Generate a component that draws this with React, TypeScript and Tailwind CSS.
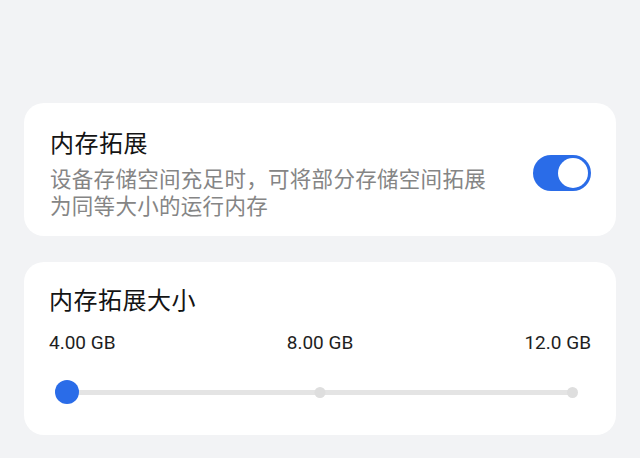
import React from "react";

export default function App() {
  const cjk = { fontFamily: '"Noto Sans CJK SC", "Noto Sans", sans-serif' };
  return (
    <div
      className="w-[640px] h-[458px] bg-[#f2f3f5] overflow-hidden pt-[103px] px-[24px] flex flex-col gap-[26px]"
      style={cjk}
    >
      <div className="bg-white rounded-[20px] h-[133px] pl-[26px] pr-[25px] pt-[23px] flex items-start justify-between">
        <div className="flex flex-col">
          <div className="text-[24px] leading-[32px] text-[#141414] font-normal tracking-[0.5px]">内存拓展</div>
          <div className="mt-[6px] w-[445px] text-[21.5px] leading-[27px] text-[#858585] tracking-[0.3px]">
            设备存储空间充足时，可将部分存储空间拓展为同等大小的运行内存
          </div>
        </div>
        <div className="mt-[29px] w-[58px] h-[36px] rounded-full bg-[#2a6ce8] flex items-center justify-end pr-[3px]">
          <div className="w-[30px] h-[30px] rounded-full bg-white" />
        </div>
      </div>

      <div className="bg-white rounded-[20px] h-[173px] px-[25px] pt-[21px] flex flex-col">
        <div className="text-[24px] leading-[32px] text-[#141414] font-normal tracking-[0.5px]">内存拓展大小</div>
        <div
          className="mt-[16px] flex justify-between text-[19px] leading-[24px] text-[#1e1e1e]"
          style={{ fontFamily: 'Roboto, "Noto Sans", sans-serif' }}
        >
          <span>4.00 GB</span>
          <span>8.00 GB</span>
          <span>12.0 GB</span>
        </div>
        <div className="mt-[25px] mx-[6px] relative h-[24px]">
          <div className="absolute left-[12px] right-[12px] top-[10px] h-[5px] bg-[#e4e4e4] rounded-full" />
          <div className="absolute left-1/2 -translate-x-1/2 top-[7px] w-[11px] h-[11px] rounded-full bg-[#dedede]" />
          <div className="absolute right-[7px] top-[7px] w-[11px] h-[11px] rounded-full bg-[#dedede]" />
          <div className="absolute left-0 top-0 w-[24px] h-[24px] rounded-full bg-[#2a6ce8]" />
        </div>
      </div>
    </div>
  );
}
